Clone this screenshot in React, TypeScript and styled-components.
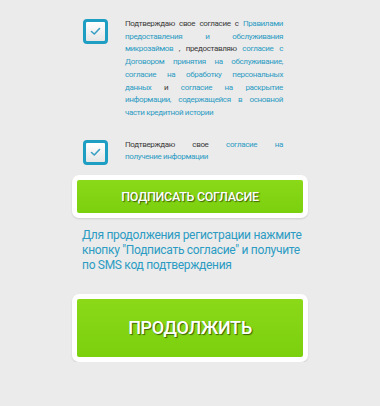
import React from "react";
import styled, { createGlobalStyle } from "styled-components";

const Global = createGlobalStyle`
  html, body { margin: 0; padding: 0; background: #ebebeb; }
  body { font-family: Roboto, "DejaVu Sans Condensed", sans-serif; }
`;

const Page = styled.div`
  width: 236px;
  margin: 0 auto;
  padding-top: 18px;
  display: flex;
  flex-direction: column;
`;

const ConsentRow = styled.div<{ $mt?: number }>`
  display: flex;
  align-items: flex-start;
  padding-left: 11px;
  margin-top: ${(p) => p.$mt ?? 0}px;
`;

const Box = styled.div`
  flex: 0 0 auto;
  width: 19px;
  height: 19px;
  margin-top: 1px;
  border: 3px solid #1d9ec2;
  border-radius: 4px;
  background: linear-gradient(#ffffff, #e6e6e6);
  display: flex;
  align-items: center;
  justify-content: center;
`;

const ConsentText = styled.p`
  margin: 0 0 0 17px;
  width: 158px;
  font-family: Roboto, sans-serif;
  font-size: 8px;
  letter-spacing: -0.35px;
  line-height: 12.7px;
  color: #3a3a3a;
  text-align: justify;
`;

const Link = styled.span`
  color: #2b9bc3;
`;

const Frame = styled.div<{ $mt: number }>`
  margin-top: ${(p) => p.$mt}px;
  background: #fff;
  border-radius: 7px;
  padding: 5px;
  box-shadow: 0 1px 2px rgba(0, 0, 0, 0.12);
`;

const GreenButton = styled.button<{ $h: number; $fs: number }>`
  display: block;
  width: 100%;
  height: ${(p) => p.$h}px;
  border: none;
  border-radius: 2px;
  background: linear-gradient(#8bd918, #7bd00e);
  color: #fff;
  font-family: Roboto, sans-serif;
  font-weight: 500;
  font-size: ${(p) => p.$fs}px;
  letter-spacing: -0.3px;
  text-shadow: 1px 1px 1px rgba(40, 70, 0, 0.8);
  padding: 0;
  cursor: pointer;
`;

const Note = styled.p`
  margin: 10px 0 0 10px;
  font-family: Roboto, sans-serif;
  font-size: 12px;
  letter-spacing: -0.3px;
  line-height: 15px;
  color: #2b9bc3;
`;

const Check = () => (
  <svg width="11" height="9" viewBox="0 0 11 9">
    <path d="M1.5 4.5 L4.3 7 L9.5 1.5" fill="none" stroke="#3a9fc4" strokeWidth="1.6" strokeLinecap="round" strokeLinejoin="round" />
  </svg>
);

export default function App() {
  return (
    <>
      <Global />
      <Page>
        <ConsentRow>
          <Box><Check /></Box>
          <ConsentText>
            Подтверждаю свое согласие с <Link>Правилами предоставления и обслуживания микрозаймов</Link> , предоставляю <Link>согласие с Договором принятия на обслуживание, согласие на обработку персональных данных</Link> и <Link>согласие на раскрытие информации, содержащейся в основной части кредитной истории</Link>
          </ConsentText>
        </ConsentRow>
        <ConsentRow $mt={19}>
          <Box><Check /></Box>
          <ConsentText>
            Подтверждаю свое <Link>согласие на получение{"\u00a0"}информации</Link>
          </ConsentText>
        </ConsentRow>
        <Frame $mt={10}>
          <GreenButton $h={33} $fs={12.5}>ПОДПИСАТЬ СОГЛАСИЕ</GreenButton>
        </Frame>
        <Note>
          Для продолжения регистрации нажмите кнопку "Подписать согласие" и получите по SMS код подтверждения
        </Note>
        <Frame $mt={21}>
          <GreenButton $h={58} $fs={18}>ПРОДОЛЖИТЬ</GreenButton>
        </Frame>
      </Page>
    </>
  );
}
